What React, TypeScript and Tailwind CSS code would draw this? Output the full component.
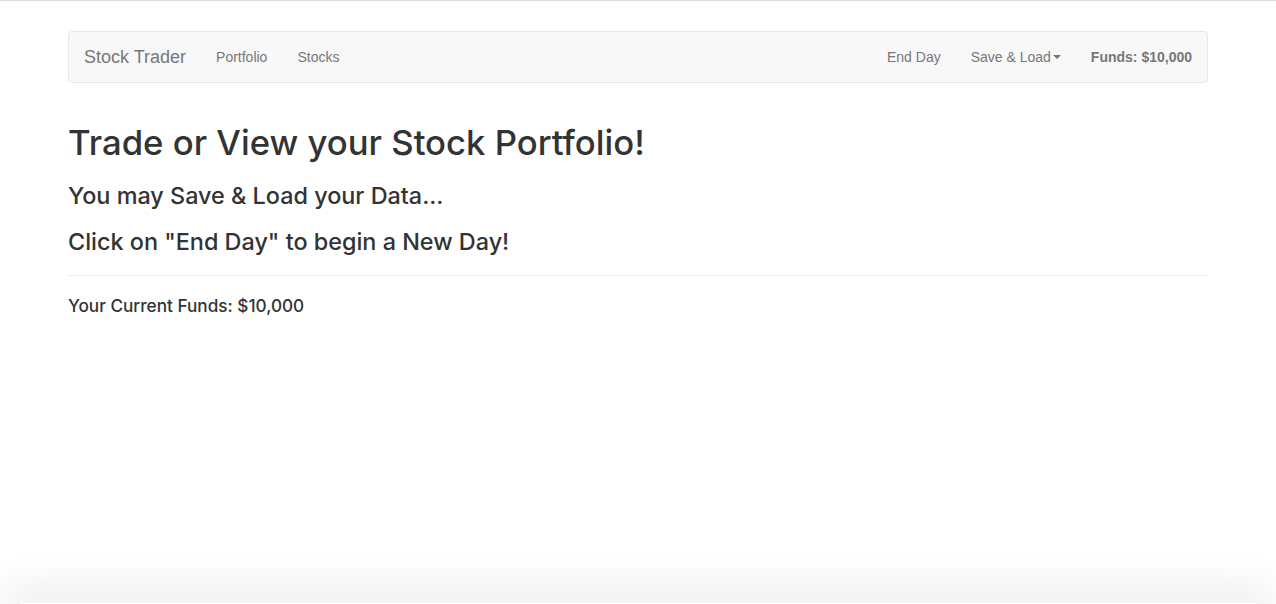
import { ReactNode } from "react";

function NavLink({ children }: { children: ReactNode }) {
  return (
    <a href="#" className="block px-[15px] py-[15px] text-[14px] leading-[20px] text-[#777] hover:text-[#333]">
      {children}
    </a>
  );
}

export default function App() {
  return (
    <div
      className="h-[604px] flex flex-col overflow-hidden bg-white text-[#333] border-t border-[#dcdcdc]"
      style={{ fontFamily: '"Liberation Sans", Arial, Helvetica, sans-serif' }}
    >
      <div className="w-[1170px] mx-auto px-[15px] pt-[30px]">
        <nav className="flex justify-between items-center min-h-[50px] bg-[#f8f8f8] border border-[#e7e7e7] rounded-[4px]">
          <div className="flex items-center">
            <a href="#" className="block px-[15px] py-[15px] text-[18px] leading-[20px] text-[#777]">
              Stock Trader
            </a>
            <NavLink>Portfolio</NavLink>
            <NavLink>Stocks</NavLink>
          </div>
          <div className="flex items-center">
            <NavLink>End Day</NavLink>
            <a href="#" className="flex items-center px-[15px] py-[15px] text-[14px] leading-[20px] text-[#777]">
              Save &amp; Load
              <span className="ml-[2px] inline-block w-0 h-0 border-t-[4px] border-t-[#777] border-x-[4px] border-x-transparent" />
            </a>
            <p className="mx-[15px] my-[15px] text-[14px] leading-[20px] font-bold text-[#777]">Funds: $10,000</p>
          </div>
        </nav>

        <div className="font-['Inter','Liberation_Sans',sans-serif]">
          <h1 className="mt-[40px] mb-[10px] text-[34.7px] leading-[39.6px] font-medium">Trade or View your Stock Portfolio!</h1>
          <h3 className="mt-[20px] mb-[10px] text-[23.4px] leading-[26.4px] font-medium">You may Save &amp; Load your Data...</h3>
          <h3 className="mt-[20px] mb-[10px] text-[23.4px] leading-[26.4px] font-medium">Click on "End Day" to begin a New Day!</h3>
          <hr className="my-[20px] border-0 border-t border-[#eee]" />
          <h4 className="mt-[10px] mb-[10px] text-[17.2px] leading-[19.8px] font-medium">Your Current Funds: $10,000</h4>
        </div>
      </div>

      <div className="mt-auto mx-[20px] h-[1px] shadow-[0_0_40px_18px_rgba(0,0,0,0.07)]" />
    </div>
  );
}
